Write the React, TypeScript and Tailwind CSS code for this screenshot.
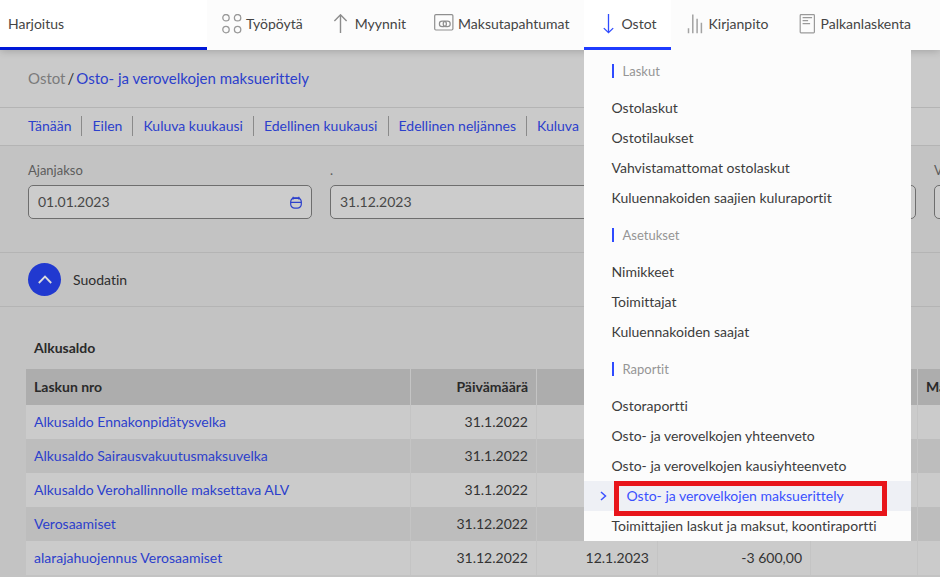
import React, { useState } from 'react';

interface NavItem {
    label: string;
    icon: React.ReactNode;
}

interface MenuSection {
    title: string;
    items: string[];
}

interface Row {
    name: string;
    date: string;
    paid?: string;
    amount?: string;
}

const ICONS = {
    desktop: (
        <svg width="20" height="20" viewBox="0 0 20 20" fill="none" stroke="#999" strokeWidth="1.3">
            <circle cx="4" cy="3.7" r="3.2" />
            <circle cx="15.6" cy="3.7" r="3.2" />
            <circle cx="4" cy="15.6" r="3.2" />
            <circle cx="15.6" cy="15.6" r="3.2" />
        </svg>
    ),
    up: (
        <svg width="20" height="20" viewBox="0 0 20 20" fill="none" stroke="#8c8c8c" strokeWidth="1.4">
            <path d="M9.5 19V1M3.4 7L9.5 0.8 15.6 7" />
        </svg>
    ),
    payments: (
        <svg width="20" height="20" viewBox="0 0 20 20" fill="none" stroke="#8f8f8f" strokeWidth="1.2">
            <rect x="0.7" y="0.6" width="18.2" height="15.4" rx="1.2" />
            <rect x="5.4" y="7.2" width="7" height="5.4" rx="2.7" />
            <rect x="9.2" y="7.2" width="7" height="5.4" rx="2.7" />
        </svg>
    ),
    down: (
        <svg width="20" height="20" viewBox="0 0 20 20" fill="none" stroke="#2f4bff" strokeWidth="1.3">
            <path d="M10.5 0v18.5M5.8 14.1l4.7 4.6 4.7-4.6" />
        </svg>
    ),
    bars: (
        <svg width="20" height="20" viewBox="0 0 20 20" fill="none" stroke="#a3a3a3" strokeWidth="1.5">
            <path d="M3.5 14.2v5M7.8 0.6v18.6M12.1 4.8v14.4M16.4 8.8v10.4" />
        </svg>
    ),
    document: (
        <svg width="20" height="20" viewBox="0 0 20 20" fill="none" stroke="#9a9a9a" strokeWidth="1.2">
            <rect x="3.2" y="0.6" width="14.2" height="18.2" rx="0.8" />
            <path d="M5.6 3.6h9.5M5.6 6.6h5.5M5.6 9.6h7.5" />
        </svg>
    ),
    calendar: (
        <svg width="12" height="13" viewBox="0 0 12 13" fill="none" stroke="#2c40cc" strokeWidth="1.2">
            <rect x="0.7" y="1.8" width="10.6" height="10.4" rx="4" />
            <path d="M0.7 6.4h10.6M2 2.4h8M3.2 0.8v2.6M8.8 0.8v2.6" />
        </svg>
    ),
};

const NAV: NavItem[] = [
    { label: 'Työpöytä', icon: ICONS.desktop },
    { label: 'Myynnit', icon: ICONS.up },
    { label: 'Maksutapahtumat', icon: ICONS.payments },
    { label: 'Ostot', icon: ICONS.down },
    { label: 'Kirjanpito', icon: ICONS.bars },
    { label: 'Palkanlaskenta', icon: ICONS.document },
];

const MENU: MenuSection[] = [
    {
        title: 'Laskut',
        items: ['Ostolaskut', 'Ostotilaukset', 'Vahvistamattomat ostolaskut', 'Kuluennakoiden saajien kuluraportit'],
    },
    {
        title: 'Asetukset',
        items: ['Nimikkeet', 'Toimittajat', 'Kuluennakoiden saajat'],
    },
    {
        title: 'Raportit',
        items: [
            'Ostoraportti',
            'Osto- ja verovelkojen yhteenveto',
            'Osto- ja verovelkojen kausiyhteenveto',
            'Osto- ja verovelkojen maksuerittely',
            'Toimittajien laskut ja maksut, koontiraportti',
        ],
    },
];

const CURRENT = 'Osto- ja verovelkojen maksuerittely';

const PERIODS = ['Tänään', 'Eilen', 'Kuluva kuukausi', 'Edellinen kuukausi', 'Edellinen neljännes', 'Kuluva'];

const ROWS: Row[] = [
    { name: 'Alkusaldo Ennakonpidätysvelka', date: '31.1.2022' },
    { name: 'Alkusaldo Sairausvakuutusmaksuvelka', date: '31.1.2022' },
    { name: 'Alkusaldo Verohallinnolle maksettava ALV', date: '31.1.2022' },
    { name: 'Verosaamiset', date: '31.12.2022' },
    { name: 'alarajahuojennus Verosaamiset', date: '31.12.2022', paid: '12.1.2023', amount: '-3 600,00' },
];

const PurchasesMenu: React.FC = () => (
    <div className="absolute left-0 top-full z-20 flex w-[327px] flex-col gap-px bg-[#fcfcfc] text-[#3c3c3c]">
        {MENU.map((section) => (
            <section key={section.title}>
                <h2 className="flex h-[43px] items-center pb-0.5 pl-7 text-[13px] text-[#959595]">
                    <span className="mr-[9px] h-[14px] w-[2px] bg-[#2f4bff]" />
                    {section.title}
                </h2>
                <ul>
                    {section.items.map((item) =>
                        item === CURRENT ? (
                            <li key={item} className="relative bg-[#eef0f5]">
                                <a href="#" className="flex h-[30px] items-center pl-4 text-[#3a50ff]">
                                    <svg className="mr-5" width="7" height="10" viewBox="0 0 7 10" fill="none" stroke="#3a50ff" strokeWidth="1.5">
                                        <path d="M1 1l4.5 4L1 9" />
                                    </svg>
                                    {item}
                                </a>
                                <span className="pointer-events-none absolute -bottom-[5px] left-[30px] right-6 top-0 z-10 border-[5px] border-[#e8151b]" />
                            </li>
                        ) : (
                            <li key={item}>
                                <a href="#" className="flex h-[30px] items-center whitespace-nowrap pl-7">{item}</a>
                            </li>
                        )
                    )}
                </ul>
            </section>
        ))}
    </div>
);

const DateField: React.FC<{ id: string; label: string; initial: string }> = ({ id, label, initial }) => {
    const [value, setValue] = useState(initial);

    return (
        <div>
            <label htmlFor={id} className="block h-5 text-[13px] leading-5 text-[#5c5c5c]">{label}</label>
            <div className="mt-[5px] flex h-[34px] items-center rounded-[5px] border border-[#6e6e6e] bg-[#cccccc] px-[9px]">
                <input
                    id={id}
                    type="text"
                    value={value}
                    onChange={(e) => setValue(e.target.value)}
                    className="min-w-0 flex-1 bg-transparent text-[#484848] outline-none"
                />
                <button type="button" aria-label="Kalenteri">{ICONS.calendar}</button>
            </div>
        </div>
    );
};

const App: React.FC = () => {
    const [activeNav, setActiveNav] = useState('Ostot');
    const cell = 'border-r border-[#c4c4c4] px-2';

    return (
        <div className="min-h-screen overflow-hidden bg-[#c3c3c3] font-['Lato',sans-serif] text-sm leading-5 text-[#333] [font-variant-ligatures:none]">
            {/* Top bar */}
            <header className="relative z-10 flex h-[50px] bg-[#fcfcfc] text-[#444] shadow-[0_1px_8px_rgba(0,0,0,0.2)]">
                <div className="flex w-[207px] shrink-0 items-center border-b-[3px] border-[#0018d8] bg-white pl-2">Harjoitus</div>
                <nav className="flex pl-px">
                    {NAV.map((item) => (
                        <div key={item.label} className="relative flex">
                            <button
                                type="button"
                                onClick={() => setActiveNav(item.label)}
                                className={`flex items-center gap-1 border-b-[3px] px-[14px] ${activeNav === item.label ? 'border-[#1f3cff] bg-white' : 'border-transparent'}`}
                            >
                                {item.icon}
                                {item.label}
                            </button>
                            {item.label === 'Ostot' && activeNav === 'Ostot' && <PurchasesMenu />}
                        </div>
                    ))}
                </nav>
            </header>

            {/* Breadcrumb */}
            <div className="flex h-[58px] items-center gap-[2px] border-b border-[#b4b4b4] bg-[#cacaca] pb-0.5 pl-7 text-[15px]">
                <a href="#" className="text-[#7b7b7b]">Ostot</a>
                <span>/</span>
                <a href="#" className="text-[#2c40cc]">{CURRENT}</a>
            </div>

            {/* Period shortcuts */}
            <div className="flex h-[38px] items-center border-b border-[#b4b4b4] bg-[#cacaca] pb-0.5 pl-7">
                {PERIODS.map((period, index) => (
                    <a
                        key={period}
                        href="#"
                        className={`whitespace-nowrap pr-[10px] text-[#2c40cc] ${index > 0 ? 'border-l border-[#8a8a8a] pl-[10px]' : ''}`}
                    >
                        {period}
                    </a>
                ))}
            </div>

            {/* Date range */}
            <div className="grid h-[107px] auto-cols-[284px] grid-flow-col content-start gap-[18px] border-b border-[#b4b4b4] pl-7 pt-[14px]">
                <DateField id="start" label="Ajanjakso" initial="01.01.2023" />
                <DateField id="end" label="." initial="31.12.2023" />
                <DateField id="compare" label="" initial="" />
                <DateField id="view" label="V" initial="" />
            </div>

            {/* Filter */}
            <div className="flex h-[54px] items-center gap-3 border-b border-[#b4b4b4] pl-7">
                <button type="button" aria-label="Suodatin" className="flex size-[33px] items-center justify-center rounded-full bg-[#2139d0]">
                    <svg width="14" height="9" viewBox="0 0 14 9" fill="none" stroke="#dcdcdc" strokeWidth="1.8">
                        <path d="M0.8 8L7 1.6 13.2 8" />
                    </svg>
                </button>
                <span className="text-[#2d2d2d]">Suodatin</span>
            </div>

            {/* Opening balance */}
            <div className="pl-[26px] pt-[31px]">
                <h3 className="pl-2 font-bold text-[#2a2a2a]">Alkusaldo</h3>
                <table className="mt-[11px] w-[1040px] table-fixed border-separate border-spacing-0">
                    <colgroup>
                        <col className="w-[385px]" />
                        <col className="w-[126px]" />
                        <col className="w-[121px]" />
                        <col className="w-[153px]" />
                        <col className="w-[107px]" />
                        <col />
                    </colgroup>
                    <thead>
                        <tr className="h-9 bg-[#adadad] text-[#2a2a2a]">
                            <th className={`${cell} text-left`}>Laskun nro</th>
                            <th className={`${cell} text-right`}>Päivämäärä</th>
                            <th className={cell} />
                            <th className={cell} />
                            <th className={cell} />
                            <th className="px-2 text-left">Maksettu</th>
                        </tr>
                    </thead>
                    <tbody>
                        {ROWS.map((row) => (
                            <tr key={row.name} className="h-[34px] odd:bg-[#cbcbcb] even:bg-[#bdbdbd]">
                                <td className={cell}>
                                    <a href="#" className="text-[#2c40cc]">{row.name}</a>
                                </td>
                                <td className={`${cell} text-right`}>{row.date}</td>
                                <td className={`${cell} text-right`}>{row.paid}</td>
                                <td className={`${cell} text-right`}>{row.amount}</td>
                                <td className={cell} />
                                <td />
                            </tr>
                        ))}
                    </tbody>
                </table>
            </div>
        </div>
    );
};

export default App;
